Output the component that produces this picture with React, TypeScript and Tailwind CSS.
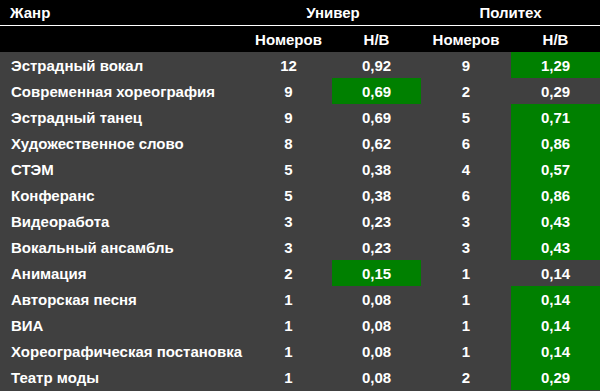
const rows: [string, number, string, boolean, number, string, boolean][] = [
  ["Эстрадный вокал", 12, "0,92", false, 9, "1,29", true],
  ["Современная хореография", 9, "0,69", true, 2, "0,29", false],
  ["Эстрадный танец", 9, "0,69", false, 5, "0,71", true],
  ["Художественное слово", 8, "0,62", false, 6, "0,86", true],
  ["СТЭМ", 5, "0,38", false, 4, "0,57", true],
  ["Конферанс", 5, "0,38", false, 6, "0,86", true],
  ["Видеоработа", 3, "0,23", false, 3, "0,43", true],
  ["Вокальный ансамбль", 3, "0,23", false, 3, "0,43", true],
  ["Анимация", 2, "0,15", true, 1, "0,14", false],
  ["Авторская песня", 1, "0,08", false, 1, "0,14", true],
  ["ВИА", 1, "0,08", false, 1, "0,14", true],
  ["Хореографическая постановка", 1, "0,08", false, 1, "0,14", true],
  ["Театр моды", 1, "0,08", false, 2, "0,29", true],
];

const cols = "grid grid-cols-[245px_87px_89px_90px_89px]";
const cell = "flex items-center justify-center pt-[2px]";

export default function App() {
  return (
    <div className="w-[600px] h-[391px] overflow-hidden bg-[#404040] font-['Liberation_Sans',Arial,sans-serif] text-[15px] font-bold text-white">
      <div className={`${cols} h-[26px] items-center bg-black border-b border-white pt-px`}>
        <div className="pl-[10px]">Жанр</div>
        <div className="col-span-2 text-center">Универ</div>
        <div className="col-span-2 text-center">Политех</div>
      </div>
      <div className={`${cols} h-[26px] items-center bg-black text-center pt-[2px]`}>
        <div />
        <div>Номеров</div>
        <div>Н/В</div>
        <div>Номеров</div>
        <div>Н/В</div>
      </div>
      {rows.map(([name, un, uv, ug, pn, pv, pg]) => (
        <div key={name} className={`${cols} h-[26px]`}>
          <div className="flex items-center pl-[11px] pt-[2px]">{name}</div>
          <div className={cell}>{un}</div>
          <div className={`${cell} ${ug ? "bg-[#008000]" : ""}`}>{uv}</div>
          <div className={cell}>{pn}</div>
          <div className={`${cell} ${pg ? "bg-[#008000]" : ""}`}>{pv}</div>
        </div>
      ))}
    </div>
  );
}
